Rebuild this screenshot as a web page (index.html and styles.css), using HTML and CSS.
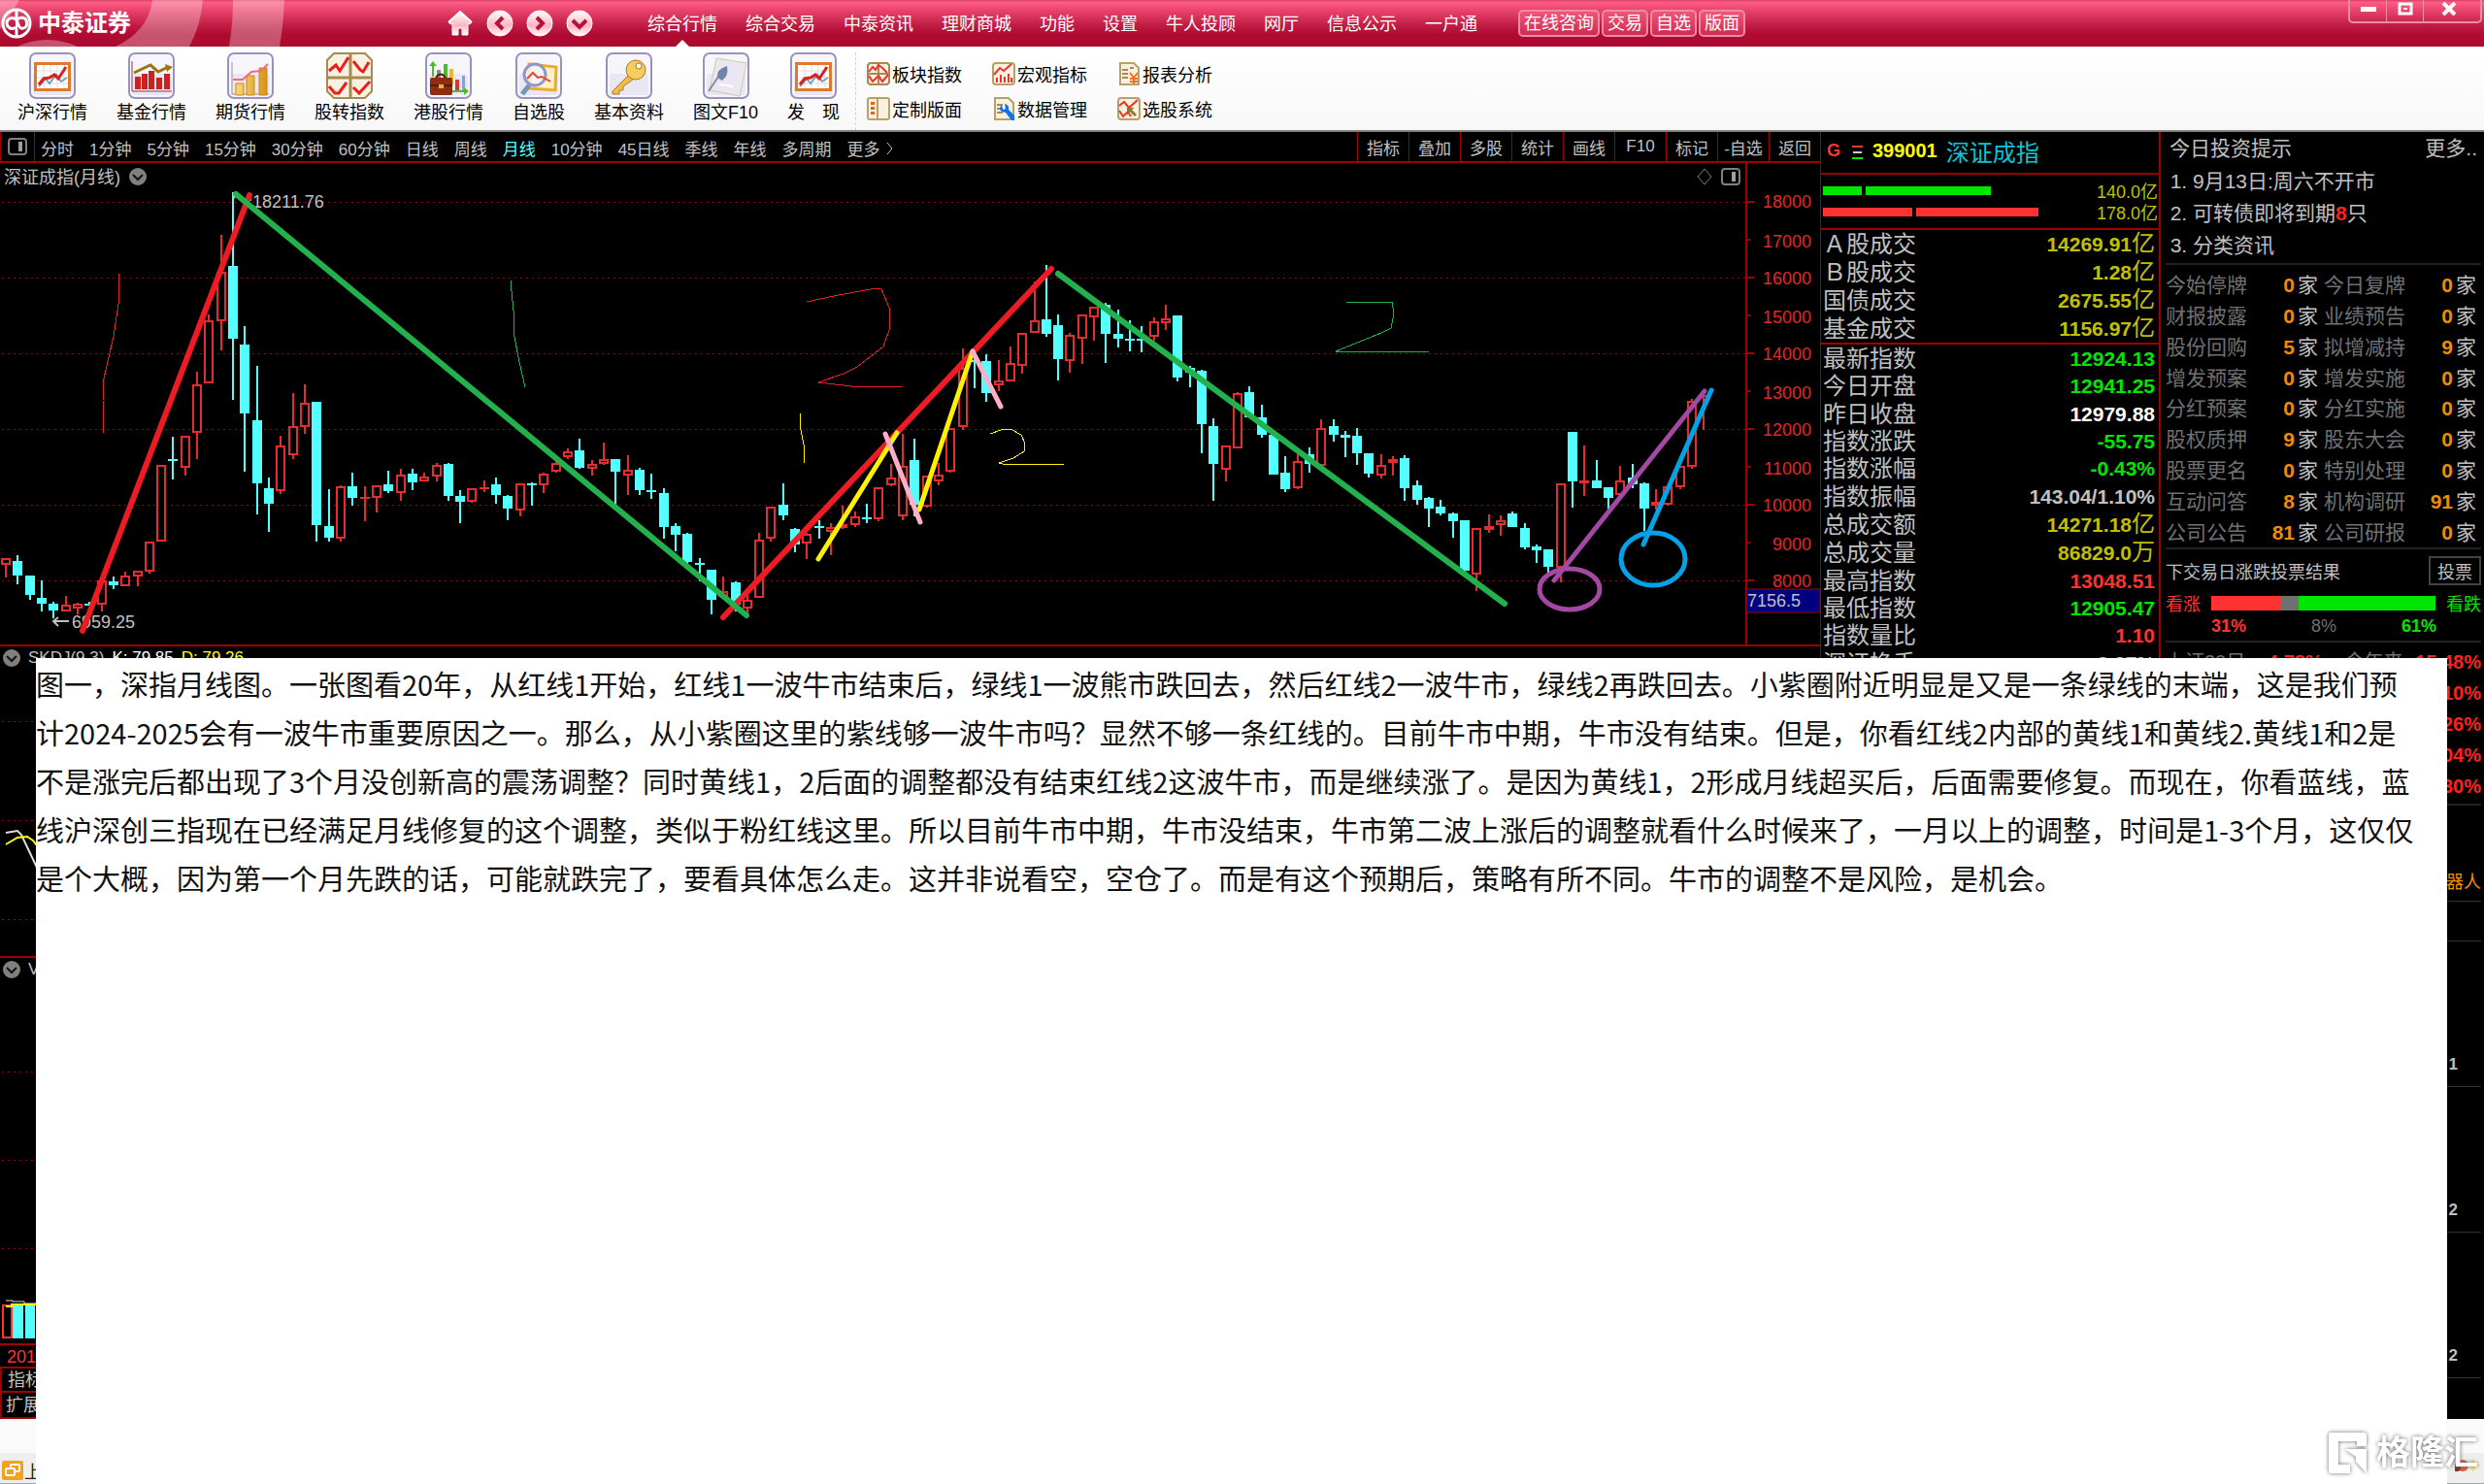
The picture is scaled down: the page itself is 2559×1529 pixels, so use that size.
FILE: index.html
```html
<!DOCTYPE html>
<html lang="zh-CN">
<head>
  <meta charset="UTF-8">
  <meta name="viewport" content="width=device-width, initial-scale=1.0">
  <title>中泰证券 - 深证成指(月线)</title>
  <link rel="stylesheet" href="styles.css">
</head>
<body>
  <!-- 公用图标 -->
  <svg class="defs" width="0" height="0">
    <defs>
      <linearGradient id="pinkFill" x1="0" y1="0" x2="0" y2="1">
        <stop offset="0" stop-color="#fff"/><stop offset="0.6" stop-color="#ffb3c4"/><stop offset="1" stop-color="#fff"/>
      </linearGradient>
      <linearGradient id="goldFill" x1="0" y1="0" x2="1" y2="0">
        <stop offset="0" stop-color="#fbd774"/><stop offset="1" stop-color="#d99318"/>
      </linearGradient>
      <symbol id="tile" viewBox="0 0 48 48">
        <rect x="1" y="1" width="46" height="46" rx="6" fill="#f6f5fb" stroke="#9a92bd" stroke-width="2"/>
        <rect x="4" y="22" width="40" height="22" rx="3" fill="#e9e7f3"/>
      </symbol>
      <symbol id="trend" viewBox="0 0 48 48">
        <use href="#tile"/>
        <rect x="6.500" y="11.500" width="35" height="27" fill="#fff" stroke="#e07a28" stroke-width="3"/>
        <path d="M15 13v24M22 13v24M29 13v24M36 13v24M8 19h32M8 26h32M8 32h32" stroke="#ddd" fill="none"/>
        <path d="M10 35l7-8 4 5 7-9 5 7 6-4" stroke="#6fa3bb" stroke-width="2" fill="none"/>
        <path d="M10 33l5-6 6-1 5-3 4 4 8-12" stroke="#d8201c" stroke-width="3" fill="none"/>
      </symbol>
      <symbol id="arrowDown" viewBox="0 0 18 18">
        <circle cx="9" cy="9" r="9" fill="#808080"/>
        <path d="M4 7l5 5 5-5" fill="none" stroke="#111" stroke-width="2"/>
      </symbol>
      <symbol id="sidebar" viewBox="0 0 20 18">
        <rect x="1" y="1" width="18" height="16" rx="3" fill="none" stroke="#808080" stroke-width="2"/>
        <rect x="11" y="4" width="4" height="10" fill="#a0a0a0"/>
      </symbol>
    </defs>
  </svg>

  <header class="titlebar">
    <svg class="titlebar-deco" width="300" height="48" viewBox="0 0 300 48">
      <path d="M0 0h20L8 20 0 30zM157 0h52q-2 26-14 48h-76q34-16 38-48zM240 0h53q-1 26-5 48h-52q4-24 4-48zM18 48q30-14 62 0z" fill="#fff" fill-opacity=".3"/>
    </svg>
    <a class="brand" href="#">
      <svg width="32" height="32" viewBox="0 0 32 32" fill="none" stroke="#fff">
        <circle cx="16" cy="16" r="14" stroke-width="3"/>
        <path d="M16 2v8M16 22v8" stroke-width="3"/>
        <path d="M15 20c-3 3-9 1-9-4s5-6 8-5c4 1 3 10 7 10 5 1 7-4 5-8-1-3-6-4-9-1" stroke-width="3"/>
        <path d="M16 9v14" stroke-width="2"/>
      </svg>
      <span>中泰证券</span>
    </a>
    <div class="nav-icons">
      <button aria-label="首页">
        <svg width="28" height="28" viewBox="0 0 28 28"><path d="M14 2l12 11-2 2-2-1v12h-6v-7h-4v7H6V14l-2 1-2-2z" fill="url(#pinkFill)" stroke="#fff"/><path d="M2 13L14 2l12 11" stroke="#fff" stroke-width="2" fill="none"/></svg>
      </button>
      <button aria-label="后退">
        <svg width="28" height="28" viewBox="0 0 28 28"><circle cx="14" cy="14" r="13" fill="url(#pinkFill)" stroke="#fff"/><path d="M17 8l-6 6 6 6" stroke="#b3123a" stroke-width="4" fill="none"/></svg>
      </button>
      <button aria-label="前进">
        <svg width="28" height="28" viewBox="0 0 28 28"><circle cx="14" cy="14" r="13" fill="url(#pinkFill)" stroke="#fff"/><path d="M11 8l6 6-6 6" stroke="#b3123a" stroke-width="4" fill="none"/></svg>
      </button>
      <button aria-label="展开">
        <svg width="28" height="28" viewBox="0 0 28 28"><circle cx="14" cy="14" r="13" fill="url(#pinkFill)" stroke="#fff"/><path d="M7 11l7 7 7-7" stroke="#b3123a" stroke-width="4" fill="none"/></svg>
      </button>
    </div>
    <nav class="menu">
      <a class="current" href="#">综合行情</a>
      <a href="#">综合交易</a>
      <a href="#">中泰资讯</a>
      <a href="#">理财商城</a>
      <a href="#">功能</a>
      <a href="#">设置</a>
      <a href="#">牛人投顾</a>
      <a href="#">网厅</a>
      <a href="#">信息公示</a>
      <a href="#">一户通</a>
    </nav>
    <div class="quick">
      <button>在线咨询</button>
      <button>交易</button>
      <button>自选</button>
      <button>版面</button>
    </div>
    <div class="window-buttons">
      <button aria-label="最小化"><svg width="16" height="16" viewBox="0 0 16 16"><rect y="6" width="16" height="5" fill="#fff"/></svg></button>
      <button aria-label="还原"><svg width="16" height="14" viewBox="0 0 16 14"><rect x="2" y="2" width="12" height="10" fill="none" stroke="#fff" stroke-width="3"/><rect x="6" y="6" width="4" height="2" fill="#fff"/></svg></button>
      <button class="close" aria-label="关闭"><svg width="16" height="14" viewBox="0 0 16 14"><path d="M2 1l12 12M14 1L2 13" stroke="#fff" stroke-width="4"/></svg></button>
    </div>
  </header>

  <div class="toolbar">
    <button class="tool"><svg viewBox="0 0 48 48"><use href="#trend"/></svg>沪深行情</button>
    <button class="tool">
      <svg viewBox="0 0 48 48"><use href="#tile"/><path d="M4 9v31h41" stroke="#8a3a3a" fill="none"/><path d="M7 25h6v13H7zM14 22h6v16h-6zM21 19h6v19h-6zM29 26h6v12h-6zM37 22h6v16h-6z" fill="#cf2020"/><path d="M6 21l17-8 8 7 10-5" stroke="#9a7414" stroke-width="3" fill="none"/><path d="M38 12l8 3-6 5z" fill="#9a7414"/></svg>基金行情
    </button>
    <button class="tool">
      <svg viewBox="0 0 48 48"><use href="#tile"/><path d="M5 10v33h38" stroke="#999" fill="none"/><path d="M9 32h8v12H9zM20 24h8v20h-8zM33 16h8v28h-8z" fill="url(#goldFill)" stroke="#c98a1c"/><path d="M6 28h10l9-8 10-1 7-7" stroke="#f06a7c" stroke-width="2" fill="none"/></svg>期货行情
    </button>
    <button class="tool">
      <svg viewBox="0 0 48 48"><path d="M8 1h32l7 7v32l-7 7H8l-7-7V8z" fill="#f8f1df" stroke="#a58b50" stroke-width="2"/><path d="M25 1v46M1 26h46" stroke="#a58b50" stroke-width="3"/><path d="M3 19l7-6 4 6 9-14M28 9l7 9 3 2 6-10M3 35l6 7 4 0 8-11M28 36l6 6 11-12" stroke="#f01c1c" stroke-width="3" fill="none"/></svg>股转指数
    </button>
    <button class="tool">
      <svg viewBox="0 0 48 48"><use href="#tile"/><path d="M8 10v15" stroke="#4dbb2c" stroke-width="2"/><path d="M4 14l4-5 4 5z" fill="#4dbb2c"/><path d="M19 12h4v14h-4z" fill="#4dbb2c"/><path d="M12 18h4v8h-4z" fill="#888"/><path d="M25 17h4v16h-4z" fill="#f4b71e"/><path d="M31 28h4v12h-4z" fill="#e0303c"/><path d="M38 24h3v16h-3z" fill="#8aa0cc"/><path d="M28 40h14" stroke="#4dbb2c" stroke-width="2"/><path d="M40 36l5 4-5 4z" fill="#4dbb2c"/><rect x="5" y="26" width="23" height="18" rx="2" fill="#8f2d12"/><path d="M11 26q5-7 10 0M5 34h23" stroke="#5c1906" stroke-width="2" fill="none"/><rect x="14" y="33" width="5" height="4" fill="#e9b23c"/></svg>港股行情
    </button>
    <button class="tool">
      <svg viewBox="0 0 48 48"><use href="#tile"/><path d="M14 12l28 3-1 24-27-2z" fill="#fff1c4" stroke="#edab2c" stroke-width="3"/><circle cx="20" cy="23" r="11" fill="#f3f6ff" fill-opacity=".8" stroke="#9296c4" stroke-width="3"/><path d="M12 27l6-6 5 5 4-1 9 5" stroke="#ea4430" stroke-width="2" fill="none"/><path d="M14 34l-7 9" stroke="#7896bc" stroke-width="5"/></svg>自选股
    </button>
    <button class="tool">
      <svg viewBox="0 0 48 48"><use href="#tile"/><path d="M23 24L7 40v3h7v-4h4v-4l10-7" fill="#f0bc4a" stroke="#b07a18"/><circle cx="31" cy="18" r="10" fill="#f6cb60" stroke="#b07a18"/><circle cx="34" cy="14" r="3" fill="#fff" stroke="#b07a18"/></svg>基本资料
    </button>
    <button class="tool">
      <svg viewBox="0 0 48 48"><use href="#tile"/><path d="M14 6l31 5-7 34-31-6z" fill="#ece6f2" stroke="#c8cfa0"/><path d="M15 26l8 1M17 33l14 2" stroke="#fff" stroke-width="2"/><path d="M6 40L18 22" stroke="#88a" stroke-width="2"/><path d="M15 26q-1-9 10-12 2 10-5 15z" fill="#6f85a8"/></svg>图文F10
    </button>
    <button class="tool"><svg viewBox="0 0 48 48"><use href="#trend"/></svg>发　现</button>
    <div class="small-tools">
      <button><svg viewBox="0 0 24 24"><path d="M3 1h18l2 2v18l-2 2H3l-2-2V3z" fill="#f8f1df" stroke="#a58b50" stroke-width="2"/><path d="M12 1v22M1 12h22" stroke="#a58b50" stroke-width="2"/><path d="M2 10l4-5 3 3 3-5 4 3 5 5M2 14l4 6 6-6 4 6 6-7" stroke="#f03030" stroke-width="2" fill="none"/></svg>板块指数</button>
      <button><svg viewBox="0 0 24 24"><rect x="1" y="1" width="22" height="22" rx="3" fill="#f8f1df" stroke="#b5a16c" stroke-width="2"/><path d="M2 13l6-7 4 3 8-7" stroke="#f03030" stroke-width="2" fill="none"/><path d="M5 21v-5M9 21v-8M13 21v-6M17 21v-9M20 21v-5" stroke="#f03030" stroke-width="2"/></svg>宏观指标</button>
      <button><svg viewBox="0 0 24 24"><path d="M3 1h14l5 5v17H3z" fill="#f8f1df" stroke="#b5a16c" stroke-width="2"/><path d="M5 8h6M5 12h6M5 16h6M13 6h4" stroke="#a58b50" stroke-width="2"/><path d="M13 11l4 5 4-5M17 16v6M13 17h8M13 20h8" stroke="#f07020" stroke-width="2" fill="none"/></svg>报表分析</button>
      <button><svg viewBox="0 0 24 24"><rect x="1" y="1" width="22" height="22" rx="2" fill="#f8f1df" stroke="#b5a16c" stroke-width="2"/><path d="M11 1v22" stroke="#b5a16c" stroke-width="2"/><path d="M6 5v3M6 10v3M6 15v3" stroke="#f06010" stroke-width="4"/></svg>定制版面</button>
      <button><svg viewBox="0 0 24 24"><path d="M3 1h14l5 5v17H3z" fill="#f8f1df" stroke="#b5a16c" stroke-width="2"/><path d="M5 8h6M5 12h6M5 16h6" stroke="#a58b50" stroke-width="2"/><path d="M10 8q-4 4 0 7l4 1 6 8h3v-5l-6-6q1-5-4-6l1 5-3 1z" fill="#1470ee"/></svg>数据管理</button>
      <button><svg viewBox="0 0 24 24"><rect x="1" y="1" width="22" height="22" rx="3" fill="#f8f1df" stroke="#b5a16c" stroke-width="2"/><path d="M2 9l5-4 5 6 9-8M2 14l4 6 5-5 3 5" stroke="#f03030" stroke-width="2" fill="none"/><path d="M11 10h8v8l-2-3-5 5-2-2 5-5z" fill="#90762e" transform="rotate(-90 15 15)"/></svg>选股系统</button>
    </div>
  </div>

  <main class="workspace">
    <section class="charts">
      <div class="periods">
        <button class="panel-toggle" aria-label="侧栏"><svg width="20" height="18"><use href="#sidebar"/></svg></button>
        <div class="period-list">
          <button>分时</button>
          <button>1分钟</button>
          <button>5分钟</button>
          <button>15分钟</button>
          <button>30分钟</button>
          <button>60分钟</button>
          <button>日线</button>
          <button>周线</button>
          <button class="active">月线</button>
          <button>10分钟</button>
          <button>45日线</button>
          <button>季线</button>
          <button>年线</button>
          <button>多周期</button>
          <button>更多<svg class="more" width="8" height="14" viewBox="0 0 8 14"><path d="M1 1l5 6-5 6" stroke="#c0c0c0" fill="none"/></svg></button>
        </div>
        <div class="chart-actions">
          <button>指标</button>
          <button>叠加</button>
          <button>多股</button>
          <button>统计</button>
          <button>画线</button>
          <button>F10</button>
          <button>标记</button>
          <button>-自选</button>
          <button>返回</button>
        </div>
      </div>

      <svg class="kline" viewBox="0 0 1875 498">
        <g class="grid">
          <path d="M2 40H1798M2 118H1798M2 196H1798M2 274H1798M2 352H1798M2 430H1798"/>
        </g>
        <g id="candles"></g>
        <path class="frame" d="M0 497H1875M1799 0V498M1799 40h8M1799 79h4M1799 118h8M1799 157h4M1799 196h8M1799 235h4M1799 274h8M1799 313h4M1799 352h8M1799 391h4M1799 430h8"/>
        <g class="axis">
          <text x="1866" y="46">18000</text>
          <text x="1866" y="87">17000</text>
          <text x="1866" y="125">16000</text>
          <text x="1866" y="165">15000</text>
          <text x="1866" y="203">14000</text>
          <text x="1866" y="243">13000</text>
          <text x="1866" y="281">12000</text>
          <text x="1866" y="321">11000</text>
          <text x="1866" y="359">10000</text>
          <text x="1866" y="399">9000</text>
          <text x="1866" y="437">8000</text>
        </g>
        <rect x="1799" y="439" width="76" height="24" fill="#000080" stroke="#a00000"/>
        <g class="label">
          <text x="1800" y="457">7156.5</text>
          <text x="4" y="21">深证成指(月线)</text>
          <text x="260" y="46">18211.76</text>
          <text x="74" y="479">6959.25</text>
        </g>
        <use href="#arrowDown" x="133" y="5" width="18" height="18"/>
        <path d="M1756 6l7 8-7 8-7-8z" fill="none" stroke="#808080"/>
        <use href="#sidebar" x="1773" y="5" width="20" height="18"/>
        <path d="M60 468l-5 4 5 5M55 472h16M241 36l3-4 3 4M247 38h12" fill="none" stroke="#c0c0c0" stroke-width="2"/>

        <!-- 手绘标注 -->
        <g class="pen">
          <path class="red thick" d="M85 482L257 33M745 468L1083 109"/>
          <path class="green thick" d="M243 32L769 466M1090 114L1550 454"/>
          <path class="yellow" d="M843 408L924 278M947 357L1002 194"/>
          <path class="pink" d="M912 279L948 370M1002 194L1031 251"/>
          <path class="purple" d="M1601 430L1756 235"/>
          <path class="blue" d="M1693 393L1763 234"/>
          <ellipse class="purple" cx="1617" cy="439" rx="31" ry="21"/>
          <ellipse class="blue" cx="1703" cy="408" rx="33" ry="27"/>
        </g>
        <g class="pen thin">
          <path class="red" d="M123 114L122 145L117 179L112 200L107 222L106 245V278"/>
          <path class="green" d="M526 121L529 152L530 179L535 205L541 231"/>
          <path class="red" d="M831 143L859 137L902 129L908 130L916 149L917 169L910 189L883 210L869 217L843 226L877 230H929"/>
          <path class="yellow" d="M824 258L825 275L828 290V309"/>
          <path class="yellow" d="M1020 279L1031 275L1041 274L1052 280L1056 289L1055 297L1044 304L1029 309L1033 310H1096"/>
          <path class="green" d="M1387 143H1434L1436 155L1433 170L1423 175L1376 194H1472"/>
        </g>
      </svg>

      <div class="indicator skdj">
        <div class="indicator-title"><svg width="18" height="18"><use href="#arrowDown"/></svg>SKDJ(9,3) <b>K: 79.85</b> <b class="yellow-text">D: 79.26</b></div>
        <svg class="lines" width="100%" height="319">
          <path class="dots" d="M2 77H1798M2 179H1798M2 281H1798"/>
          <path d="M6 192l12-2 4 4 18 38" fill="none" stroke="#ddd" stroke-width="2"/>
          <path d="M6 204l12-7 10-1 6 4 6 8" fill="none" stroke="#ff0" stroke-width="2"/>
        </svg>
      </div>
      <div class="indicator volume">
        <div class="indicator-title"><svg width="18" height="18"><use href="#arrowDown"/></svg>VOL</div>
        <svg class="lines" width="100%" height="397">
          <path class="dots" d="M2 117H1798M2 208H1798M2 299H1798"/>
          <rect x="3" y="358" width="9" height="33" fill="none" stroke="#ff3232" stroke-width="2"/>
          <path d="M13 357h11v35H13zM26 357h10v35H26z" fill="#54ffff"/>
          <path d="M6 353h7v1h12v2h15" fill="none" stroke="#ddd"/>
          <path d="M6 359h6v-2h28" fill="none" stroke="#ff0" stroke-width="2"/>
        </svg>
      </div>
      <div class="dates">2010年</div>
      <div class="bottom-tabs first"><button>指标</button></div>
      <div class="bottom-tabs"><button>扩展</button></div>
    </section>

    <section class="quote">
      <h1><span class="flag">G</span><svg width="12" height="20" viewBox="0 0 12 20"><path d="M0 5h11" stroke="#f33" stroke-width="2"/><path d="M1 11h9" stroke="#ccc" stroke-width="2"/><path d="M0 17h11" stroke="#00e600" stroke-width="2"/></svg><b>399001</b><span class="name">深证成指</span></h1>
      <div class="flows">
        <div class="flow green"><i style="width: 40px"></i><i style="width: 129px"></i><span>140.0亿</span></div>
        <div class="flow red"><i style="width: 92px"></i><i style="width: 126px"></i><span>178.0亿</span></div>
      </div>
      <table class="turnover">
        <tr><th>Ａ股成交</th><td class="amount">14269.91<span>亿</span></td></tr>
        <tr><th>Ｂ股成交</th><td class="amount">1.28<span>亿</span></td></tr>
        <tr><th>国债成交</th><td class="amount">2675.55<span>亿</span></td></tr>
        <tr><th>基金成交</th><td class="amount">1156.97<span>亿</span></td></tr>
      </table>
      <table class="detail">
        <tr><th>最新指数</th><td class="down">12924.13</td></tr>
        <tr><th>今日开盘</th><td class="down">12941.25</td></tr>
        <tr><th>昨日收盘</th><td class="flat">12979.88</td></tr>
        <tr><th>指数涨跌</th><td class="down">-55.75</td></tr>
        <tr><th>指数涨幅</th><td class="down">-0.43%</td></tr>
        <tr><th>指数振幅</th><td>143.04/1.10%</td></tr>
        <tr><th>总成交额</th><td class="amount">14271.18<span>亿</span></td></tr>
        <tr><th>总成交量</th><td class="amount">86829.0<span>万</span></td></tr>
        <tr><th>最高指数</th><td class="up">13048.51</td></tr>
        <tr><th>最低指数</th><td class="down">12905.47</td></tr>
        <tr><th>指数量比</th><td class="up">1.10</td></tr>
        <tr><th>深证换手</th><td>2.27%</td></tr>
      </table>
    </section>

    <aside class="info">
      <div class="tips">
        <div class="tips-head"><span>今日投资提示</span><a href="#">更多..</a></div>
        <ol>
          <li>9月13日:周六不开市</li>
          <li>可转债即将到期<b>8</b>只</li>
          <li>分类资讯</li>
        </ol>
      </div>
      <div class="events">
        <span>今始停牌</span><b>0</b><em>家</em><span>今日复牌</span><b>0</b><em>家</em>
        <span>财报披露</span><b>0</b><em>家</em><span>业绩预告</span><b>0</b><em>家</em>
        <span>股份回购</span><b>5</b><em>家</em><span>拟增减持</span><b>9</b><em>家</em>
        <span>增发预案</span><b>0</b><em>家</em><span>增发实施</span><b>0</b><em>家</em>
        <span>分红预案</span><b>0</b><em>家</em><span>分红实施</span><b>0</b><em>家</em>
        <span>股权质押</span><b>9</b><em>家</em><span>股东大会</span><b>0</b><em>家</em>
        <span>股票更名</span><b>0</b><em>家</em><span>特别处理</span><b>0</b><em>家</em>
        <span>互动问答</span><b>8</b><em>家</em><span>机构调研</span><b>91</b><em>家</em>
        <span>公司公告</span><b>81</b><em>家</em><span>公司研报</span><b>0</b><em>家</em>
      </div>
      <div class="vote">
        <div class="vote-head"><span>下交易日涨跌投票结果</span><button>投票</button></div>
        <div class="vote-bar">
          <span class="up">看涨</span>
          <div class="bar"><i class="bar-up" style="width: 31%"></i><i class="bar-flat" style="width: 8%"></i><i class="bar-down" style="width: 61%"></i></div>
          <span class="down">看跌</span>
        </div>
        <div class="vote-numbers"><span class="up">31%</span><span>8%</span><span class="down">61%</span></div>
      </div>
      <div class="returns">
        <div><span>上证20日</span><b>4.78%</b><span>今年来</span><b>15.48%</b></div>
        <div><b>42.10%</b></div>
        <div><b>24.26%</b></div>
        <div><b>60.04%</b></div>
        <div><b>41.30%</b></div>
      </div>
      <div class="hot"><a href="#">器人</a></div>
      <div class="gap-row"></div>
      <div class="rank"><span>1</span></div>
      <div class="rank"><span>2</span></div>
      <div class="rank"><span>2</span></div>
    </aside>
  </main>

  <footer class="statusbar">
    <div class="status-left">
      <svg width="22" height="20" viewBox="0 0 22 20"><rect width="22" height="20" rx="2" fill="#f5a21b"/><rect x="9" y="4" width="9" height="7" rx="1" fill="none" stroke="#fff" stroke-width="2"/><rect x="4" y="8" width="9" height="7" rx="1" fill="#f5a21b" stroke="#fff" stroke-width="2"/></svg>
      上证
    </div>
    <svg class="spark" width="30" height="28" viewBox="0 0 30 28"><circle cx="8" cy="10" r="6" fill="#e8562a"/><circle cx="2" cy="12" r="4" fill="#7a3420"/><path d="M19 3l2 5 5 2-5 2-2 5-2-5-5-2 5-2z" fill="#ffe14a"/></svg>
  </footer>

  <article class="note">
    图一，深指月线图。一张图看20年，从红线1开始，红线1一波牛市结束后，绿线1一波熊市跌回去，然后红线2一波牛市，绿线2再跌回去。小紫圈附近明显是又是一条绿线的末端，这是我们预<br>
    计2024-2025会有一波牛市重要原因之一。那么，从小紫圈这里的紫线够一波牛市吗？显然不够一条红线的。目前牛市中期，牛市没有结束。但是，你看红线2内部的黄线1和黄线2.黄线1和2是<br>
    不是涨完后都出现了3个月没创新高的震荡调整？同时黄线1，2后面的调整都没有结束红线2这波牛市，而是继续涨了。是因为黄线1，2形成月线超买后，后面需要修复。而现在，你看蓝线，蓝<br>
    线沪深创三指现在已经满足月线修复的这个调整，类似于粉红线这里。所以目前牛市中期，牛市没结束，牛市第二波上涨后的调整就看什么时候来了，一月以上的调整，时间是1-3个月，这仅仅<br>
    是个大概，因为第一个月先跌的话，可能就跌完了，要看具体怎么走。这并非说看空，空仓了。而是有这个预期后，策略有所不同。牛市的调整不是风险，是机会。
  </article>

  <div class="watermark">
    <svg width="42" height="44" viewBox="0 0 42 44"><path d="M4 1h33q3 0 3 3v11H30v-5H11v24h12v9H4q-3 0-3-3V4q0-3 3-3zM17 18h23v25L29 31v-5z" fill="#fff"/></svg>
    <span>格隆汇</span>
  </div>

  <script src="chart.js"></script>
</body>
</html>
```

FILE: styles.css
```css
* {
  box-sizing: border-box;
}
body {
  margin: 0;
  min-height: 100vh;
  position: relative;
  overflow-x: hidden;
  display: flex;
  flex-direction: column;
  background: #000;
  color: #c0c0c0;
  font-family: "Liberation Sans", "Noto Sans CJK SC", sans-serif;
  font-size: 18px;
}
button {
  font: inherit;
  color: inherit;
  background: none;
  border: none;
  padding: 0;
  white-space: nowrap;
  cursor: pointer;
}
a {
  color: inherit;
  text-decoration: none;
}
svg {
  display: block;
  flex-shrink: 0;
}
.defs {
  position: absolute;
}

/* 标题栏 */
.titlebar {
  position: relative;
  height: 48px;
  display: flex;
  align-items: center;
  color: #fff;
  background: linear-gradient(#d0405f, #ff5c85 2px, #e54068 12px, #c01d45 26px, #b00a30 36px, #ad0a30);
}
.titlebar-deco {
  position: absolute;
  left: 0;
  top: 0;
}
.brand {
  position: relative;
  display: flex;
  align-items: center;
  gap: 6px;
  width: 460px;
  padding-left: 1px;
  font-size: 24px;
  line-height: 32px;
  font-weight: bold;
}
.nav-icons {
  display: flex;
  gap: 13px;
  width: 207px;
}
.menu {
  display: flex;
  gap: 29px;
  height: 48px;
  line-height: 50px;
}
.menu .current::after {
  content: "";
  display: block;
  width: 0;
  margin: -9px auto 0;
  border: 7px solid transparent;
  border-top: none;
  border-bottom-color: #fff;
}
.quick {
  display: flex;
  gap: 2px;
  margin-left: 42px;
}
.quick button {
  height: 28px;
  padding: 0 4px;
  line-height: 24px;
  border: 2px solid #f08aa3;
  border-radius: 5px;
  background: linear-gradient(#f0557a, #d02a52);
}
.window-buttons {
  display: flex;
  align-self: flex-start;
  margin-left: auto;
  margin-right: 2px;
  border: 2px solid #f08aa3;
  border-top: none;
  border-radius: 0 0 5px 5px;
}
.window-buttons button {
  display: flex;
  align-items: center;
  justify-content: center;
  width: 38px;
  height: 22px;
  padding-bottom: 4px;
  border-right: 1px solid #f08aa3;
}
.window-buttons .close {
  width: 58px;
  padding-right: 6px;
  border-right: none;
}

/* 工具栏 */
.toolbar {
  height: 88px;
  padding: 6px 18px 0;
  display: flex;
  gap: 30px;
  color: #000;
  background: linear-gradient(#fff, #f8f8f8);
  border-bottom: 2px solid #808080;
}
.tool {
  display: flex;
  flex-direction: column;
  align-items: center;
  line-height: 29px;
}
.tool svg {
  width: 48px;
  height: 48px;
}
.small-tools {
  display: grid;
  grid-template-columns: repeat(3, 129px);
  grid-auto-rows: 36px;
  align-content: start;
  margin-left: -14px;
  padding: 4px 0 0 11px;
  border-left: 1px dashed #d0d0e4;
}
.small-tools button {
  display: flex;
  align-items: center;
  gap: 2px;
}
.small-tools svg {
  width: 24px;
  height: 24px;
}

.workspace {
  flex: none;
  display: grid;
  grid-template-columns: minmax(0, 1fr) 351px 333px;
}

/* 周期栏 */
.periods {
  display: flex;
  height: 32px;
  font-size: 17px;
  border-bottom: 2px solid #a00000;
}
.panel-toggle {
  width: 36px;
  padding-left: 7px;
  border: 1px solid #a00000;
  border-width: 0 1px;
}
.period-list {
  display: flex;
  gap: 16px;
  padding: 3px 0 0 6px;
}
.period-list .active {
  color: #54ffff;
}
.more {
  display: inline-block;
  margin-left: 6px;
}
.chart-actions {
  display: flex;
  margin-left: auto;
}
.chart-actions button {
  width: 53px;
  border-left: 1px solid #a00000;
}

/* K线图 */
.kline {
  width: 100%;
}
.grid path,
.dots {
  fill: none;
  stroke: #a00000;
  stroke-width: 1;
  stroke-dasharray: 2 4;
  shape-rendering: crispEdges;
}
.frame {
  fill: none;
  stroke: #a00000;
  stroke-width: 2;
}
.axis text {
  font-size: 18px;
  fill: #e02828;
  text-anchor: end;
}
.label text {
  font-size: 18px;
  fill: #c0c0c0;
}
.candle-up {
  fill: #000;
  stroke: #e62c2c;
  stroke-width: 2;
}
.candle-down {
  fill: #54ffff;
  stroke: #54ffff;
  stroke-width: 2;
}
.pen {
  fill: none;
  stroke-width: 5;
  stroke-linecap: round;
  stroke-linejoin: round;
}
.pen .thick {
  stroke-width: 6;
}
.pen.thin {
  stroke-width: 1;
  shape-rendering: crispEdges;
}
.pen .red { stroke: #ed1c24; }
.pen .green { stroke: #22b14c; }
.pen .yellow { stroke: #fff200; }
.pen .pink { stroke: #ffaec9; }
.pen .purple { stroke: #a349a4; }
.pen .blue { stroke: #00a2e8; }

.indicator {
  position: relative;
  border-bottom: 2px solid #a00000;
}
.skdj {
  height: 321px;
}
.volume {
  height: 399px;
}
.indicator-title {
  position: absolute;
  left: 3px;
  top: 0;
  display: flex;
  align-items: center;
  gap: 8px;
  line-height: 24px;
  font-size: 17px;
}
.indicator-title b {
  font-weight: normal;
  color: #fff;
}
.indicator-title .yellow-text {
  color: #ff0;
}
.dates {
  height: 22px;
  padding-left: 7px;
  line-height: 24px;
  color: #ff3232;
}
.bottom-tabs {
  height: 27px;
  padding-left: 4px;
  border: 1px solid #a00000;
  border-width: 0 0 2px 2px;
  line-height: 27px;
}
.bottom-tabs.first {
  border-top-width: 2px;
  padding-left: 6px;
  line-height: 24px;
}

/* 报价 */
.quote {
  border: 2px solid #a00000;
  border-width: 0 2px 0 1px;
}
.quote h1 {
  display: flex;
  align-items: center;
  height: 44px;
  margin: 0;
  padding: 0 6px 3px;
  gap: 9px;
  font-size: 20px;
  font-weight: normal;
  border-bottom: 2px solid #a00000;
}
.quote .flag {
  width: 17px;
  font-size: 18px;
  font-weight: bold;
  color: #f33;
}
.quote h1 b {
  color: #ff0;
}
.quote .name {
  font-size: 24px;
  color: #00c8dc;
}
.flows {
  height: 57px;
  padding: 5px 1px 0 2px;
  border-bottom: 2px solid #a00000;
}
.flow {
  display: flex;
  align-items: center;
  gap: 4px;
  height: 22px;
}
.flow i {
  height: 9px;
}
.flow.green i {
  background: #00e600;
}
.flow.red i {
  background: #ff3232;
}
.flow span {
  margin-left: auto;
  color: #c0c000;
}
.quote table {
  width: 100%;
  border-collapse: collapse;
  font-size: 24px;
  line-height: 28px;
}
.quote th,
.quote td {
  padding: 0;
}
.quote th {
  padding-left: 2px;
  text-align: left;
  font-weight: normal;
}
.quote td {
  padding-right: 4px;
  text-align: right;
  font-size: 21px;
  font-weight: bold;
}
.quote td span {
  font-size: 24px;
  font-weight: normal;
}
.quote .turnover {
  height: 118px;
  border-bottom: 2px solid #a00000;
}
.quote .detail {
  height: 342px;
  margin-top: 1px;
}
.quote .amount {
  color: #c0c000;
}
.quote .flat {
  color: #fff;
}
.quote .up,
.info .up {
  color: #ff3232;
}
.quote .down,
.info .down {
  color: #00e600;
}

/* 右侧资讯 */
.info {
  padding: 0 3px 0 5px;
  font-size: 21px;
}
.tips {
  height: 137px;
  border-bottom: 2px solid #222;
}
.tips-head {
  display: flex;
  justify-content: space-between;
  padding: 0 4px;
  line-height: 34px;
}
.tips ol {
  margin: 0;
  padding-left: 28px;
  line-height: 33px;
}
.tips b {
  color: #f22;
}
.events {
  display: grid;
  grid-template-columns: 90px 43px 30px 90px 43px 1fr;
  grid-template-rows: repeat(9, 1fr);
  align-items: center;
  height: 293px;
  padding-top: 5px;
  line-height: 31px;
  color: #707070;
  border-bottom: 2px solid #222;
}
.events b {
  color: #f08c00;
  font-size: 21px;
  text-align: right;
}
.events em {
  padding-left: 3px;
  font-style: normal;
  color: #c0c0c0;
}
.vote {
  height: 96px;
  font-size: 18px;
  border-bottom: 2px solid #222;
}
.vote-head {
  display: flex;
  justify-content: space-between;
  align-items: center;
  height: 43px;
}
.vote-head button {
  width: 54px;
  height: 30px;
  border: 2px solid #444;
}
.vote-bar {
  display: flex;
  align-items: center;
  gap: 11px;
  height: 24px;
}
.bar {
  flex: 1;
  display: flex;
  height: 15px;
}
.bar-up { background: #ff3232; }
.bar-flat { background: #707070; }
.bar-down { background: #00e600; }
.vote-numbers {
  display: flex;
  justify-content: space-between;
  padding: 0 46px 0 47px;
  color: #707070;
  line-height: 24px;
}
.vote-numbers .up,
.vote-numbers .down {
  font-weight: bold;
}
.returns {
  height: 168px;
  padding-top: 4px;
  line-height: 32px;
  font-size: 20px;
  color: #707070;
  border-bottom: 2px solid #222;
}
.returns div {
  display: flex;
  justify-content: space-between;
}
.returns b {
  color: #ff2020;
}
.returns b:last-child {
  margin-left: auto;
}
.returns span + b {
  margin: 0 10px;
}
.returns span + b:last-child {
  margin: 0;
}
.hot {
  height: 99px;
  padding-top: 60px;
  line-height: 38px;
  text-align: right;
  color: #f08c00;
  font-size: 18px;
  border-bottom: 1px solid #333;
}
.hot a {
  font-size: 18px;
}
.gap-row {
  height: 41px;
  border-bottom: 1px solid #333;
}
.rank {
  height: 150px;
  padding: 116px 24px 0 0;
  line-height: 22px;
  font-size: 17px;
  text-align: right;
  font-weight: bold;
  border-bottom: 1px solid #333;
}

/* 状态栏 */
.statusbar {
  flex: 1;
  min-height: 67px;
  display: flex;
  align-items: flex-end;
  justify-content: space-between;
  color: #222;
  background: linear-gradient(#fafafa 35px, #eee 35px);
  border-bottom: 1px solid #9aa;
}
.status-left {
  display: flex;
  align-items: center;
  gap: 1px;
  padding-left: 2px;
}

/* 文字说明，盖在行情窗口上 */
.note {
  position: absolute;
  left: 37px;
  right: 38px;
  top: 678px;
  bottom: 0;
  padding: 1px 0;
  overflow: hidden;
  background: #fff;
  color: #111;
  font-family: "Noto Sans CJK SC", sans-serif;
  font-size: 29px;
  line-height: 50px;
  white-space: nowrap;
}
.watermark {
  position: absolute;
  right: 6px;
  bottom: 9px;
  display: flex;
  align-items: center;
  gap: 8px;
  color: #fff;
  font-size: 35px;
  line-height: 46px;
  font-weight: bold;
  filter: drop-shadow(0 0 2px #666);
}
```

FILE: chart.js
```js
// 月K线: [颜色, 最高, 实体上沿, 实体下沿, 最低], 纵向单位为 1/3 像素
const months = [
  ['r', 1185, 1189, 1205, 1246], ['g', 1175, 1198, 1238, 1265], ['g', 1240, 1243, 1300, 1313],
  ['g', 1253, 1311, 1327, 1350], ['g', 1320, 1329, 1346, 1370], ['r', 1301, 1333, 1349, 1349],
  ['r', 1324, 1330, 1340, 1358], ['g', 1320, 1329, 1331, 1333], ['r', 1256, 1256, 1330, 1349],
  ['g', 1243, 1261, 1269, 1282], ['r', 1226, 1243, 1273, 1273], ['r', 1226, 1226, 1241, 1273],
  ['r', 1135, 1137, 1227, 1232], ['r', 896, 899, 1133, 1133], ['g', 811, 883, 885, 941],
  ['r', 811, 811, 907, 930], ['r', 608, 650, 799, 879], ['r', 433, 452, 646, 646],
  ['r', 185, 304, 453, 544], ['g', 55, 284, 508, 697], ['g', 469, 527, 738, 918],
  ['g', 590, 761, 954, 1049], ['g', 937, 973, 1018, 1103], ['r', 806, 839, 979, 986],
  ['r', 676, 781, 867, 878], ['r', 649, 709, 781, 801], ['g', 706, 706, 1084, 1134],
  ['g', 973, 1090, 1121, 1134], ['r', 960, 965, 1124, 1133], ['g', 922, 967, 999, 1022],
  ['r', 964, 1000, 1002, 1071], ['r', 960, 962, 998, 1045], ['g', 914, 960, 977, 985],
  ['r', 910, 929, 985, 1007], ['g', 909, 928, 950, 976], ['r', 920, 937, 949, 949],
  ['r', 892, 901, 934, 949], ['g', 892, 896, 994, 1007], ['g', 974, 995, 1012, 1077],
  ['r', 970, 973, 1012, 1015], ['r', 946, 970, 973, 980], ['g', 937, 959, 990, 1018],
  ['g', 990, 995, 1031, 1067], ['r', 955, 956, 1039, 1057], ['g', 950, 956, 958, 1022],
  ['r', 920, 926, 961, 985], ['r', 884, 893, 919, 922], ['r', 847, 857, 872, 880],
  ['g', 815, 856, 905, 909], ['r', 883, 898, 908, 931], ['r', 829, 883, 895, 897],
  ['g', 880, 883, 918, 1022], ['r', 866, 916, 931, 990], ['g', 905, 914, 976, 990],
  ['g', 923, 978, 980, 1003], ['g', 968, 986, 1089, 1126], ['g', 1077, 1090, 1112, 1165],
  ['g', 1108, 1112, 1196, 1222], ['g', 1185, 1203, 1205, 1256], ['g', 1224, 1225, 1314, 1359],
  ['r', 1243, 1289, 1305, 1310], ['g', 1256, 1264, 1330, 1350], ['r', 1300, 1318, 1340, 1365],
  ['r', 1108, 1132, 1308, 1308], ['r', 1027, 1028, 1124, 1134], ['g', 955, 1022, 1053, 1067],
  ['g', 1093, 1099, 1143, 1166], ['r', 1108, 1114, 1141, 1188], ['g', 1067, 1090, 1092, 1126],
  ['r', 1076, 1093, 1105, 1175], ['r', 1022, 1083, 1093, 1094], ['r', 1040, 1060, 1084, 1089],
  ['g', 1018, 1063, 1066, 1076], ['r', 968, 970, 1066, 1070], ['r', 893, 938, 961, 963],
  ['r', 800, 902, 1057, 1067], ['g', 815, 886, 1020, 1057], ['r', 932, 934, 1025, 1030],
  ['r', 892, 929, 949, 960], ['r', 785, 786, 919, 922], ['r', 536, 600, 781, 788],
  ['g', 545, 575, 580, 660], ['g', 555, 580, 676, 702], ['r', 573, 640, 652, 670],
  ['r', 532, 586, 638, 640], ['r', 490, 493, 592, 615], ['r', 329, 452, 488, 490],
  ['g', 280, 451, 491, 500], ['g', 433, 469, 571, 635], ['r', 490, 497, 575, 612],
  ['r', 433, 434, 506, 585], ['r', 410, 412, 440, 514], ['g', 397, 405, 491, 581],
  ['g', 418, 496, 508, 535], ['g', 450, 509, 512, 545], ['g', 469, 510, 513, 549],
  ['r', 442, 457, 502, 512], ['r', 401, 448, 458, 480], ['g', 436, 437, 626, 639],
  ['g', 590, 600, 612, 657], ['g', 603, 608, 770, 860], ['g', 752, 779, 895, 1008],
  ['r', 838, 841, 913, 949], ['r', 671, 677, 845, 846], ['g', 653, 676, 751, 752],
  ['g', 712, 752, 805, 814], ['g', 806, 807, 927, 928], ['g', 869, 923, 972, 981],
  ['r', 865, 889, 970, 971], ['g', 842, 867, 895, 922], ['r', 757, 785, 900, 905],
  ['g', 757, 779, 804, 824], ['g', 793, 806, 812, 873], ['g', 784, 811, 860, 896],
  ['g', 860, 865, 923, 936], ['r', 865, 899, 930, 940], ['r', 871, 881, 892, 931],
  ['g', 866, 878, 968, 1008], ['g', 946, 964, 1004, 1020], ['g', 995, 1003, 1031, 1089],
  ['g', 1004, 1030, 1048, 1052], ['g', 1045, 1049, 1071, 1121], ['g', 1070, 1072, 1224, 1226],
  ['r', 1094, 1096, 1237, 1287], ['r', 1049, 1090, 1097, 1106], ['r', 1054, 1070, 1084, 1115],
  ['g', 1040, 1049, 1089, 1089], ['g', 1077, 1094, 1152, 1157], ['g', 1144, 1153, 1161, 1201],
  ['g', 1157, 1162, 1211, 1235], ['r', 954, 956, 1214, 1259], ['g', 796, 797, 949, 1030],
  ['r', 838, 948, 953, 994], ['g', 883, 947, 968, 968], ['g', 967, 968, 998, 1035],
  ['r', 901, 947, 991, 1000], ['g', 895, 940, 958, 968], ['g', 950, 956, 1031, 1100],
  ['r', 973, 1014, 1024, 1035], ['r', 964, 965, 1020, 1022], ['r', 900, 902, 967, 971],
  ['r', 694, 703, 904, 909], ['r', 680, 683, 688, 788]
];

const STEP = 12.32;
const y = v => Math.round(12 + v / 3);

document.getElementById('candles').innerHTML = months.map(([color, high, top, bottom, low], i) => {
  const x = Math.round(6 + i * STEP);
  const height = Math.max(y(bottom) - y(top) - 1, 0);
  const body = height ? `M${x - 4} ${y(top)}h8v${height}h-8z` : `M${x - 5} ${y(top)}h10`;
  return `<path class="candle-${color === 'r' ? 'up' : 'down'}" d="M${x} ${y(high)}V${y(top)}M${x} ${y(bottom)}V${y(low)}${body}"/>`;
}).join('');
```
